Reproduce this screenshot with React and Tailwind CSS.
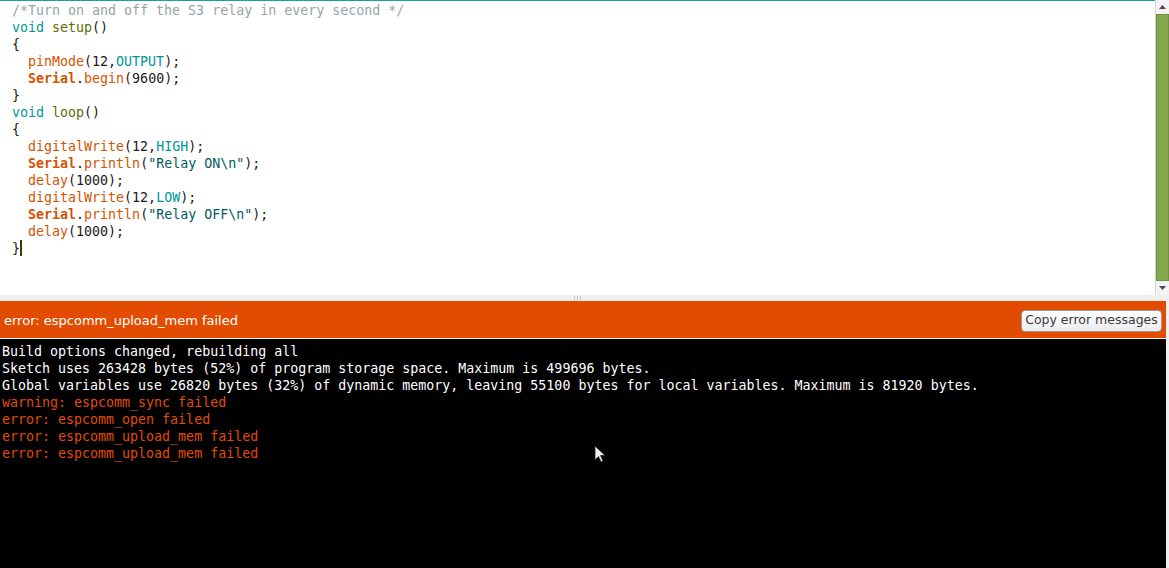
import { useState } from 'react'

const K = ({ c, children }) => <span className={c}>{children}</span>

// colour roles taken from the Arduino IDE theme
const kw = 'text-[#00979c]'
const fn = 'text-[#d35400]'
const fnDef = 'text-[#5e6d03]'
const str = 'text-[#005c5f]'
const cls = 'text-[#d35400] font-bold'

const codeLines = [
	<K c="text-[#95a5a6]">/*Turn on and off the S3 relay in every second */</K>,
	<><K c={kw}>void</K> <K c={fnDef}>setup</K>()</>,
	<>{'{'}</>,
	<>  <K c={fn}>pinMode</K>(12,<K c={kw}>OUTPUT</K>);</>,
	<>  <K c={cls}>Serial</K>.<K c={fn}>begin</K>(9600);</>,
	<>{'}'}</>,
	<><K c={kw}>void</K> <K c={fnDef}>loop</K>()</>,
	<>{'{'}</>,
	<>  <K c={fn}>digitalWrite</K>(12,<K c={kw}>HIGH</K>);</>,
	<>  <K c={cls}>Serial</K>.<K c={fn}>println</K>(<K c={str}>"Relay ON\n"</K>);</>,
	<>  <K c={fn}>delay</K>(1000);</>,
	<>  <K c={fn}>digitalWrite</K>(12,<K c={kw}>LOW</K>);</>,
	<>  <K c={cls}>Serial</K>.<K c={fn}>println</K>(<K c={str}>"Relay OFF\n"</K>);</>,
	<>  <K c={fn}>delay</K>(1000);</>,
	<>{'}'}<span className="inline-block w-[2px] h-[16px] bg-[#3b3b00] align-[-3px]" /></>,
]

const consoleLines = [
	{ text: 'Build options changed, rebuilding all' },
	{ text: 'Sketch uses 263428 bytes (52%) of program storage space. Maximum is 499696 bytes.' },
	{ text: 'Global variables use 26820 bytes (32%) of dynamic memory, leaving 55100 bytes for local variables. Maximum is 81920 bytes.' },
	{ text: 'warning: espcomm_sync failed', err: true },
	{ text: 'error: espcomm_open failed', err: true },
	{ text: 'error: espcomm_upload_mem failed', err: true },
	{ text: 'error: espcomm_upload_mem failed', err: true },
]

const App = () => {
	const [copied, setCopied] = useState(false)

	return (
		<div className="w-[1169px] h-[568px] overflow-hidden flex flex-col bg-[#f0f0f0] relative">
			{/* Editor */}
			<div className="h-[295px] flex shrink-0">
				<div className="flex-1 bg-white border-t border-[#17a1a5] pt-px pl-[12px] font-['DejaVu_Sans_Mono',monospace] text-[13.3px] leading-[17px] text-[#1a1a1a] whitespace-pre">
					{codeLines.map((line, i) => (
						<div key={i} className="h-[17px]">{line}</div>
					))}
				</div>

				{/* Scrollbar */}
				<div className="w-[14px] flex flex-col bg-[#f3f3f3] border-l border-[#d8d8d8]">
					<div className="h-[14px] flex items-center justify-center">
						<svg width="7" height="4" viewBox="0 0 7 4"><path d="M3.5 0 L7 4 L0 4 Z" fill="#4a4a4a" /></svg>
					</div>
					<div className="flex-1 bg-[#85a74e] border border-[#6f9040]" />
					<div className="h-[14px] flex items-center justify-center">
						<svg width="7" height="4" viewBox="0 0 7 4"><path d="M0 0 L7 0 L3.5 4 Z" fill="#4a4a4a" /></svg>
					</div>
				</div>
			</div>

			{/* Splitter */}
			<div className="h-[6px] flex items-center justify-center gap-[2px] bg-[#f0f0f0] pr-[14px]">
				<span className="w-px h-[4px] bg-[#c8c8c8]" />
				<span className="w-px h-[4px] bg-[#c8c8c8]" />
				<span className="w-px h-[4px] bg-[#c8c8c8]" />
			</div>

			{/* Status bar */}
			<div className="h-[37px] bg-[#e34c00] flex items-center justify-between pl-[4px] pr-[4px] mr-[3px] font-['DejaVu_Sans',sans-serif]">
				<span className="text-white text-[13px] pt-[3px]">error: espcomm_upload_mem failed</span>
				<button
					onClick={() => setCopied(true)}
					className="h-[22px] w-[141px] mt-[2px] rounded-[4px] bg-gradient-to-b from-white to-[#ececec] border border-[#9a9a9a] text-[#3a3a3a] text-[12.5px] leading-none"
				>
					{copied ? 'Copy error messages' : 'Copy error messages'}
				</button>
			</div>

			{/* Console */}
			<div className="flex-1 bg-black mt-px mr-[3px] pl-[2px] pt-[4px] font-['DejaVu_Sans_Mono',monospace] text-[13.3px] leading-[17px] whitespace-pre">
				{consoleLines.map((l, i) => (
					<div key={i} className={l.err ? 'text-[#e34c00]' : 'text-white'}>{l.text}</div>
				))}
			</div>

			{/* Mouse pointer */}
			<svg className="absolute left-[594px] top-[445px]" width="12" height="19" viewBox="0 0 12 19">
				<path d="M1 1 L1 15 L4.5 11.5 L7 17 L9 16 L6.5 10.5 L11 10.5 Z" fill="#f2f2f2" stroke="#222" strokeWidth="0.8" />
			</svg>
		</div>
	)
}

export default App
